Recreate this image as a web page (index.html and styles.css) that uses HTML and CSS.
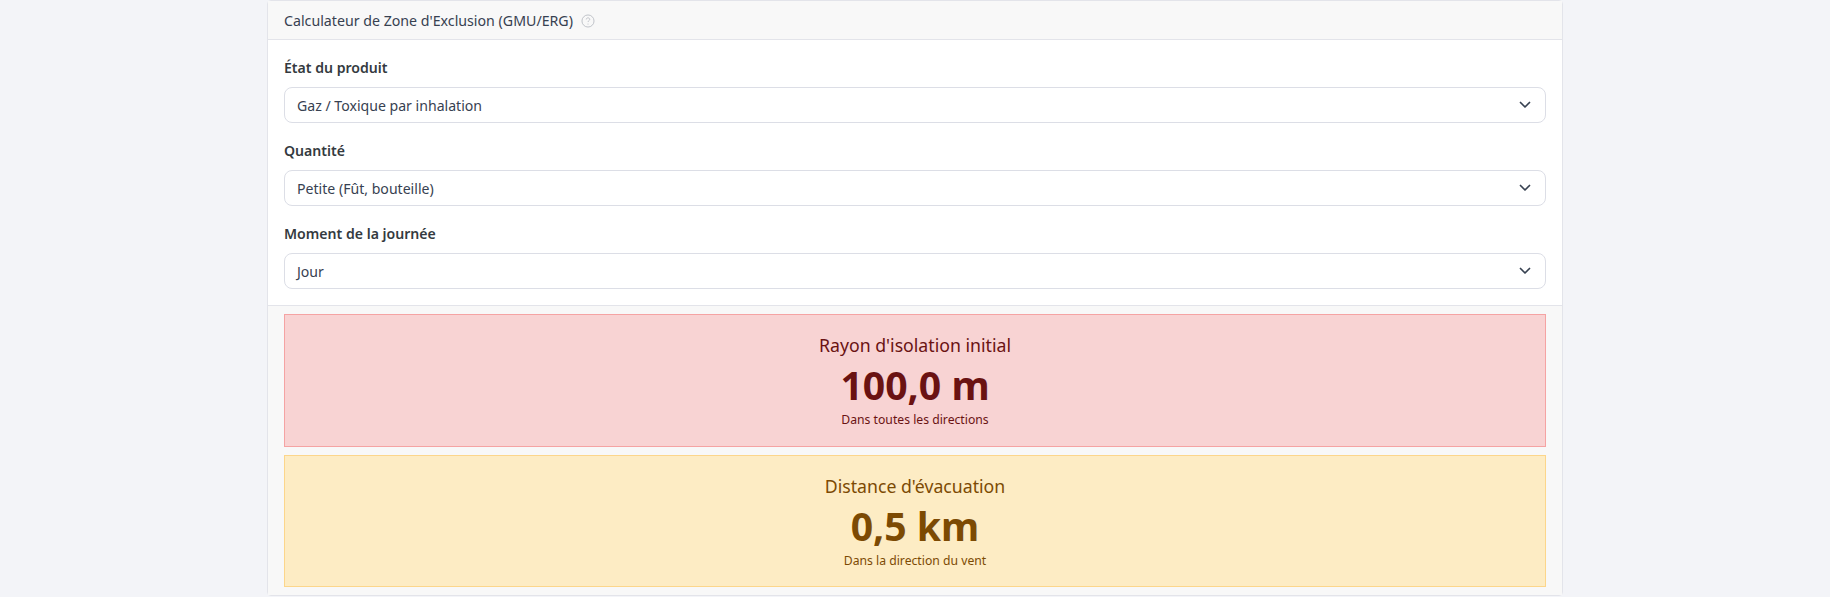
FILE: index.html
```html
<!DOCTYPE html>
<html lang="fr">
<head>
<meta charset="utf-8">
<title>Calculateur</title>
<link rel="stylesheet" href="styles.css">
</head>
<body>
<main class="card">
  <header class="card-header">
    <span>Calculateur de Zone d'Exclusion (GMU/ERG)</span>
    <svg class="help" viewBox="0 0 16 16" width="14" height="14" fill="none" stroke="currentColor"><circle cx="8" cy="8" r="6.9"/><path d="M6 6.2C6 5 7 4.4 8 4.4s2 .7 2 1.7c0 1.5-2 1.5-2 3.1"/><circle cx="8" cy="11.4" r=".6" fill="currentColor" stroke="none"/></svg>
  </header>
  <section class="card-body">
    <div class="field">
      <label class="label">État du produit</label>
      <div class="select"><span>Gaz / Toxique par inhalation</span><svg class="chevron" viewBox="0 0 12 8" width="12" height="8" fill="none" stroke="#374151" stroke-width="1.7" stroke-linecap="round" stroke-linejoin="round"><path d="m1.5 1.5 4.5 4.5 4.5-4.5"/></svg></div>
    </div>
    <div class="field">
      <label class="label">Quantité</label>
      <div class="select"><span>Petite (Fût, bouteille)</span><svg class="chevron" viewBox="0 0 12 8" width="12" height="8" fill="none" stroke="#374151" stroke-width="1.7" stroke-linecap="round" stroke-linejoin="round"><path d="m1.5 1.5 4.5 4.5 4.5-4.5"/></svg></div>
    </div>
    <div class="field">
      <label class="label">Moment de la journée</label>
      <div class="select"><span>Jour</span><svg class="chevron" viewBox="0 0 12 8" width="12" height="8" fill="none" stroke="#374151" stroke-width="1.7" stroke-linecap="round" stroke-linejoin="round"><path d="m1.5 1.5 4.5 4.5 4.5-4.5"/></svg></div>
    </div>
  </section>
  <footer class="card-footer">
    <div class="alert danger">
      <div class="alert-title">Rayon d'isolation initial</div>
      <div class="alert-value">100,0 m</div>
      <div class="alert-note">Dans toutes les directions</div>
    </div>
    <div class="alert warning">
      <div class="alert-title">Distance d'évacuation</div>
      <div class="alert-value">0,5 km</div>
      <div class="alert-note">Dans la direction du vent</div>
    </div>
  </footer>
</main>
</body>
</html>
```
FILE: styles.css
```css
* { box-sizing: border-box; }
html, body { margin: 0; }
body {
  background: #f3f4f8;
  font-family: "Noto Sans", sans-serif;
  font-size: 14.2px;
  line-height: 21px;
  color: #374151;
  height: 597px;
  overflow: hidden;
}
.card {
  width: 1296px;
  margin: 0 auto;
  background: #fff;
  border: 1px solid #e3e4ea;
  border-radius: 4px;
}
.card-header {
  display: flex;
  align-items: center;
  gap: 8px;
  height: 39px;
  padding: 0 16px;
  background: #f8f8f8;
  border-bottom: 1px solid #e3e4ea;
}
.help { color: #b8bbc2; margin-top: 1px; }
.card-body {
  display: flex;
  flex-direction: column;
  gap: 16px;
  padding: 16px;
}
.label {
  display: block;
  font-size: 14.1px;
  font-weight: 600;
  line-height: 23px;
  margin-bottom: 8px;
  color: #343a40;
}
.select {
  display: flex;
  align-items: center;
  justify-content: space-between;
  height: 36px;
  padding: 0 14px 0 12px;
  border: 1px solid #dcdee6;
  border-radius: 8px;
  background: #fff;
  font-size: 14.1px;
}
.card-footer {
  display: flex;
  flex-direction: column;
  gap: 8px;
  padding: 8px 16px;
  background: #f8f8f8;
  border-top: 1px solid #e3e4ea;
}
.alert {
  text-align: center;
  padding: 16px 16px 17px;
  border: 1px solid;
}
.danger { background: #f8d3d3; border-color: #f5a3a3; color: #6a1212; }
.warning { background: #fdecc4; border-color: #fcd68b; color: #7c4a03; }
.alert-title { font-size: 17.7px; line-height: 28px; }
.alert-value { font-size: 39.2px; line-height: 52px; font-weight: 700; }
.alert-note { font-size: 12.2px; line-height: 17.5px; }
```
